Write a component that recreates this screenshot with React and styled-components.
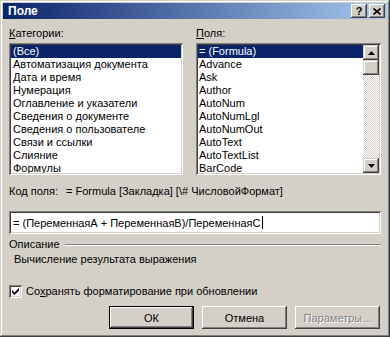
import React from "react";
import styled, { createGlobalStyle } from "styled-components";

const GlobalStyle = createGlobalStyle`
  html, body { margin: 0; padding: 0; background: #D4D0C8; }
  body {
    font-family: "Liberation Sans", Arial, sans-serif;
    font-size: 11px;
    color: #000;
  }
`;

const face = "#D4D0C8";

const raised = `
  box-shadow: inset -1px -1px #404040, inset 1px 1px #fff,
    inset -2px -2px #808080, inset 2px 2px ${face};
`;

const sunken = `
  box-shadow: inset 1px 1px #808080, inset -1px -1px #fff,
    inset 2px 2px #404040, inset -2px -2px ${face};
`;

const Window = styled.div`
  width: 390px;
  height: 337px;
  box-sizing: border-box;
  padding: 3px;
  background: ${face};
  box-shadow: inset -1px -1px #404040, inset 1px 1px ${face},
    inset -2px -2px #808080, inset 2px 2px #fff;
  display: flex;
  flex-direction: column;
`;

const TitleBar = styled.div`
  height: 18px;
  display: flex;
  align-items: center;
  padding: 0 2px 0 5px;
  background: linear-gradient(to right, #0A246A, #A6CAF0);
  color: #fff;
  font-weight: bold;
  font-size: 12px;
`;

const TitleText = styled.span`
  flex: 1;
`;

const TitleButton = styled.div`
  width: 16px;
  height: 14px;
  margin-left: ${p => p.$gap || 0}px;
  background: ${face};
  ${raised};
  display: flex;
  align-items: center;
  justify-content: center;
  color: #000;
  font-size: 11px;
  font-weight: bold;
  line-height: 1;
`;

const Body = styled.div`
  flex: 1;
  display: flex;
  flex-direction: column;
  padding: 8px 6px 5px 6px;
`;

const Columns = styled.div`
  display: grid;
  grid-template-columns: 174px 185px;
  column-gap: 13px;
`;

const Column = styled.div`
  display: flex;
  flex-direction: column;
`;

const Label = styled.div`
  line-height: 13px;
  height: 13px;
  margin-bottom: 3px;
`;

const Key = styled.span`
  text-decoration: underline;
`;

const ListBox = styled.div`
  height: 132px;
  box-sizing: border-box;
  padding: 2px;
  background: #fff;
  ${sunken};
  display: flex;
  overflow: hidden;
`;

const Items = styled.div`
  flex: 1;
  overflow: hidden;
`;

const Item = styled.div`
  height: 13px;
  line-height: 13px;
  padding-left: ${p => p.$pad}px;
  white-space: nowrap;
  background: ${p => (p.$selected ? "#0A246A" : "transparent")};
  color: ${p => (p.$selected ? "#fff" : "#000")};
`;

const ScrollBar = styled.div`
  width: 16px;
  display: flex;
  flex-direction: column;
  background: repeating-conic-gradient(#fff 0 25%, ${face} 0 50%) 0 0 / 2px 2px;
`;

const ScrollButton = styled.div`
  height: 15px;
  flex-shrink: 0;
  background: ${face};
  box-shadow: inset -1px -1px #404040, inset 1px 1px ${face},
    inset -2px -2px #808080, inset 2px 2px #fff;
  display: flex;
  align-items: center;
  justify-content: center;
`;

const Track = styled.div`
  flex: 1;
`;

const CodeRow = styled.div`
  margin-top: 10px;
  display: flex;
  line-height: 13px;
`;

const CodeLabel = styled.span`
  width: 57px;
  flex-shrink: 0;
`;

const TextField = styled.div`
  margin-top: 13px;
  height: 23px;
  box-sizing: border-box;
  padding: 2px 2px 2px 4px;
  background: #fff;
  ${sunken};
  display: flex;
  align-items: center;
  white-space: nowrap;
`;

const Caret = styled.span`
  display: inline-block;
  width: 1px;
  height: 13px;
  background: #000;
  margin-left: 1px;
`;

const GroupHeader = styled.div`
  margin-top: 4px;
  display: flex;
  align-items: center;
  line-height: 13px;
  gap: 5px;
`;

const Etch = styled.div`
  flex: 1;
  border-top: 1px solid #808080;
  border-bottom: 1px solid #fff;
`;

const Description = styled.div`
  margin-top: 2px;
  padding-left: 5px;
  line-height: 13px;
`;

const CheckRow = styled.div`
  margin-top: 19px;
  display: flex;
  align-items: center;
  gap: 4px;
  line-height: 13px;
`;

const CheckBox = styled.div`
  width: 13px;
  height: 13px;
  box-sizing: border-box;
  background: #fff;
  ${sunken};
  display: flex;
  align-items: center;
  justify-content: center;
`;

const ButtonRow = styled.div`
  margin-top: 8px;
  display: flex;
  justify-content: flex-end;
  gap: 8px;
  padding-right: 1px;
`;

const Button = styled.div`
  width: 85px;
  height: 23px;
  box-sizing: border-box;
  background: ${face};
  display: flex;
  align-items: center;
  justify-content: center;
  color: ${p => (p.$disabled ? "#808080" : "#000")};
  text-shadow: ${p => (p.$disabled ? "1px 1px #fff" : "none")};
  box-shadow: ${p =>
    p.$default
      ? `inset 0 0 0 1px #000, inset -2px -2px #404040, inset 2px 2px #fff,
         inset -3px -3px #808080, inset 3px 3px ${face}`
      : `inset -1px -1px #404040, inset 1px 1px #fff,
         inset -2px -2px #808080, inset 2px 2px ${face}`};
`;

const categories = [
  "(Все)",
  "Автоматизация документа",
  "Дата и время",
  "Нумерация",
  "Оглавление и указатели",
  "Сведения о документе",
  "Сведения о пользователе",
  "Связи и ссылки",
  "Слияние",
  "Формулы",
];

const fields = [
  "= (Formula)",
  "Advance",
  "Ask",
  "Author",
  "AutoNum",
  "AutoNumLgl",
  "AutoNumOut",
  "AutoText",
  "AutoTextList",
  "BarCode",
];

const Arrow = ({ down }) => (
  <svg width="7" height="4" viewBox="0 0 7 4">
    <path d={down ? "M0 0H7L3.5 4Z" : "M3.5 0L7 4H0Z"} fill="#000" />
  </svg>
);

export default function App() {
  return (
    <>
      <GlobalStyle />
      <Window>
        <TitleBar>
          <TitleText>Поле</TitleText>
          <TitleButton>?</TitleButton>
          <TitleButton $gap={2}>
            <svg width="8" height="7" viewBox="0 0 8 7">
              <path d="M0.5 0.5L7.5 6.5M7.5 0.5L0.5 6.5" stroke="#000" strokeWidth="1.6" />
            </svg>
          </TitleButton>
        </TitleBar>
        <Body>
          <Columns>
            <Column>
              <Label><Key>К</Key>атегории:</Label>
              <ListBox>
                <Items>
                  {categories.map((c, i) => (
                    <Item key={c} $pad={2} $selected={i === 0}>{c}</Item>
                  ))}
                </Items>
              </ListBox>
            </Column>
            <Column>
              <Label><Key>П</Key>оля:</Label>
              <ListBox>
                <Items>
                  {fields.map((f, i) => (
                    <Item key={f} $pad={1} $selected={i === 0}>{f}</Item>
                  ))}
                </Items>
                <ScrollBar>
                  <ScrollButton><Arrow /></ScrollButton>
                  <ScrollButton />
                  <Track />
                  <ScrollButton><Arrow down /></ScrollButton>
                </ScrollBar>
              </ListBox>
            </Column>
          </Columns>
          <CodeRow>
            <CodeLabel>Ко<Key>д</Key> поля:</CodeLabel>
            <span>= Formula [Закладка] [\# ЧисловойФормат]</span>
          </CodeRow>
          <TextField>
            = (ПеременнаяА + ПеременнаяВ)/ПеременнаяС<Caret />
          </TextField>
          <GroupHeader>
            <span>Описание</span>
            <Etch />
          </GroupHeader>
          <Description>Вычисление результата выражения</Description>
          <CheckRow>
            <CheckBox>
              <svg width="7" height="7" viewBox="0 0 7 7">
                <path d="M0 2L0 4.5L2.5 7L7 2.5L7 0L2.5 4.5Z" fill="#000" />
              </svg>
            </CheckBox>
            <span>Со<Key>х</Key>ранять форматирование при обновлении</span>
          </CheckRow>
          <ButtonRow>
            <Button $default>ОК</Button>
            <Button>Отмена</Button>
            <Button $disabled>Параметры...</Button>
          </ButtonRow>
        </Body>
      </Window>
    </>
  );
}
